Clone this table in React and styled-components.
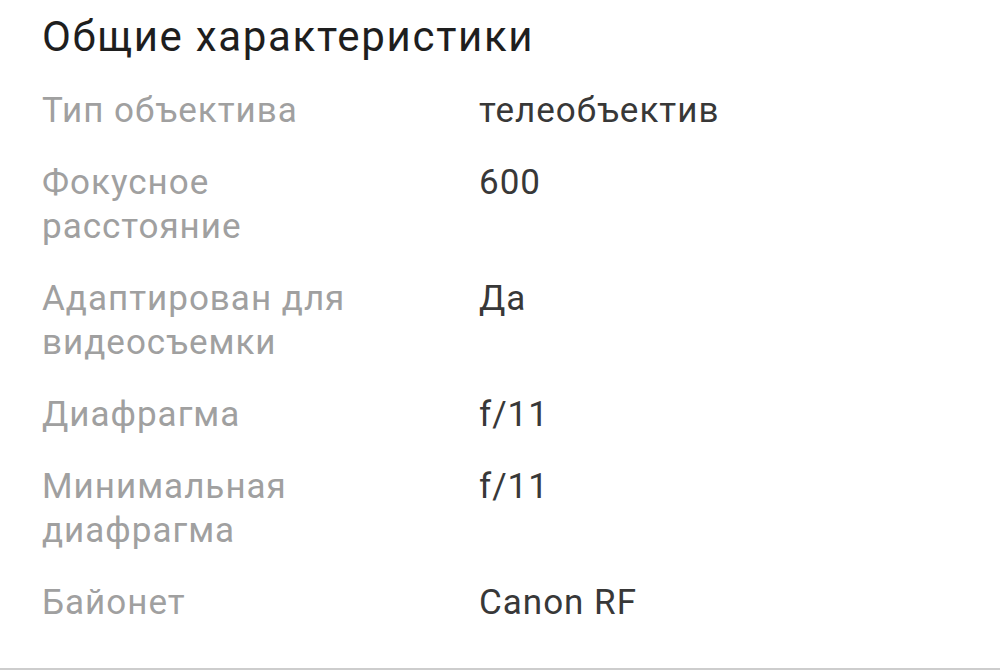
import React from 'react'
import styled, { createGlobalStyle } from 'styled-components'

const Global = createGlobalStyle`
    body {
        margin: 0;
        background: #fff;
        font-family: Roboto, 'Noto Sans', sans-serif;
    }
`;

const Section = styled.section`
    height: 670px;
    box-sizing: border-box;
    padding: 13px 42px 0;
    border-bottom: 2px solid #cdcdcd;
`;

const Title = styled.h2`
    margin: 0 0 28px;
    font-size: 42px;
    font-weight: 400;
    line-height: 48px;
    letter-spacing: 1.7px;
    color: #1e1e1e;
`;

const Specs = styled.dl`
    margin: 0;
    display: grid;
    grid-template-columns: 437px 1fr;
    row-gap: 28px;
    font-size: 35px;
    line-height: 44px;
    letter-spacing: 1px;
`;

const Label = styled.dt`
    margin: 0;
    padding-right: 97px;
    color: #a0a0a0;
`;

const Value = styled.dd`
    margin: 0;
    color: #383838;
`;

const specs = [
    ['Тип объектива', 'телеобъектив'],
    ['Фокусное расстояние', '600'],
    ['Адаптирован для видеосъемки', 'Да'],
    ['Диафрагма', 'f/11'],
    ['Минимальная диафрагма', 'f/11'],
    ['Байонет', 'Canon RF'],
];

export default function App() {
    return (
        <>
            <Global />
            <Section>
                <Title>Общие характеристики</Title>
                <Specs>
                    {specs.map(([label, value]) => (
                        <React.Fragment key={label}>
                            <Label>{label}</Label>
                            <Value>{value}</Value>
                        </React.Fragment>
                    ))}
                </Specs>
            </Section>
        </>
    )
}
